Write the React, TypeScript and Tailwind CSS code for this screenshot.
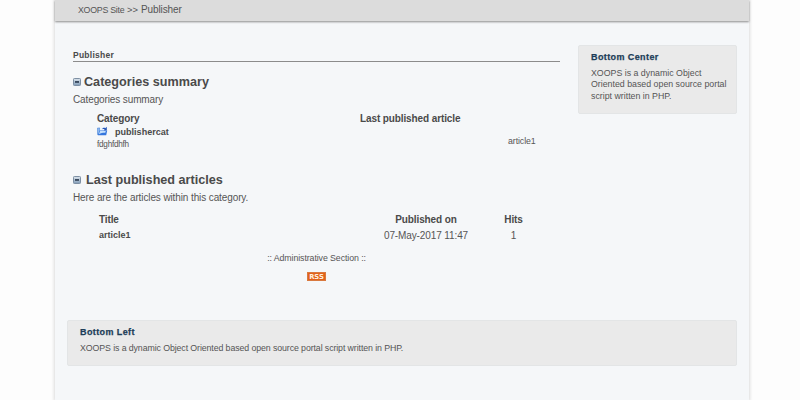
import React from "react";

const sans = "font-['Liberation_Sans',Arial,sans-serif]";

function CollapseIcon() {
  return (
    <svg className="block h-2 w-2 shrink-0" viewBox="0 0 8 8">
      <defs>
        <linearGradient id="collapse" x1="0" y1="0" x2="0" y2="1">
          <stop offset="0" stopColor="#dde6ee" />
          <stop offset="1" stopColor="#7f9ab6" />
        </linearGradient>
      </defs>
      <rect x="0.5" y="0.5" width="7" height="7" rx="0.8" fill="url(#collapse)" stroke="#7d8fa3" />
      <rect x="2" y="3.2" width="4" height="1.5" fill="#1c2c42" />
    </svg>
  );
}

function FolderIcon() {
  return (
    <svg className="-mt-[3px] block h-[10px] w-[11px] shrink-0" viewBox="0 0 11 10">
      <path d="M.5 2h2.500v6.500H.5z" fill="#8db8ee" stroke="#4d87d8" strokeWidth=".6" />
      <path d="M3 2 8.400 .8v5H3z" fill="#e9f3fd" />
      <path d="M5 3.300C6 1.700 7.200 1.500 8.200 2.200L9.800.8v3.700H6.600l1-1.100C6.800 2.900 6 2.900 5 3.300z" fill="#2454b8" />
      <path d="M2.600 4.500h7.600L9.200 9.300H.8z" fill="#3476de" />
      <path d="M3 5h5.800l-.5 1.800C6 6.700 4 7.200 1.900 8.200z" fill="#c4e0fc" />
    </svg>
  );
}

function BlockTitle({ children }: { children: React.ReactNode }) {
  return (
    <h3 className="h-3 whitespace-nowrap text-[9px] leading-[11px] font-bold tracking-[0.4px] text-[#1d3d58] [-webkit-text-stroke:0.25px_#1d3d58]">
      {children}
    </h3>
  );
}

export default function App() {
  return (
    <div className={`h-[400px] w-[800px] overflow-hidden bg-[#fdfdfd] text-[#555555] ${sans}`}>
      <div className="ml-[55px] flex h-[400px] w-[694px] flex-col bg-[#f5f7f9] shadow-[0_0_3px_1px_#dcdcdc]">
        <nav className="flex h-[21px] shrink-0 items-start bg-[#dcdcdc] pl-[23px] whitespace-nowrap leading-5 shadow-[0_1px_2px_#8c8c8c]">
          <span className="w-[49px] text-[8.8px] tracking-[-0.25px]">XOOPS Site</span>
          <span className="w-[14px] text-[9.4px]">&gt;&gt;</span>
          <span className="text-[10px] tracking-[-0.12px]">Publisher</span>
        </nav>

        <div className="flex h-[299px] shrink-0 items-start pt-6 pl-[18px]">
          <main className="w-[487px] shrink-0 whitespace-nowrap">
            <h4 className="h-[17px] border-b border-[#8c8c8c] text-[8.5px] leading-5 font-bold tracking-[0.25px] text-[#4a4a4a]">Publisher</h4>

            <section className="pt-3">
              <h2 className="flex h-4 items-center gap-[3px] text-[12.64px] leading-4 font-bold text-[#4a4a4a]">
                <CollapseIcon />
                Categories summary
              </h2>
              <p className="pt-[3px] text-[10px] leading-[13px] tracking-[-0.12px]">Categories summary</p>
              <div className="mt-[7px] flex h-3 pl-6 text-[10px] leading-3 font-bold tracking-[-0.11px] text-[#4a4a4a]">
                <span className="w-[263px]">Category</span>
                <span>Last published article</span>
              </div>
              <div className="flex pl-6">
                <div className="w-[411px]">
                  <div className="flex h-[14px] items-center gap-[7px] text-[9.05px] leading-[14px] font-bold text-[#4a4a4a]">
                    <FolderIcon />
                    publishercat
                  </div>
                  <p className="h-3 text-[8.2px] leading-3 tracking-[-0.25px]">fdghfdhfh</p>
                </div>
                <span className="pt-[10px] text-[8.800px] leading-3 tracking-[-0.09px]">article1</span>
              </div>
            </section>

            <section className="pt-[21px]">
              <h2 className="flex h-4 items-center gap-[5px] text-[12.64px] leading-4 font-bold text-[#4a4a4a]">
                <CollapseIcon />
                Last published articles
              </h2>
              <p className="pt-[3px] text-[10px] leading-[13px] tracking-[-0.11px]">Here are the articles within this category.</p>
              <div className="mt-[9px] grid h-3 grid-cols-[271px_112px_63px] pl-[26px] text-[10px] leading-[13px] font-bold tracking-[-0.11px] text-[#4a4a4a]">
                <span>Title</span>
                <span className="text-center">Published on</span>
                <span className="text-center">Hits</span>
              </div>
              <div className="mt-1 grid h-3 grid-cols-[271px_112px_63px] pl-[26px] text-[10px] leading-[13px] tracking-[-0.11px]">
                <span className="text-[9px] font-bold tracking-normal text-[#4a4a4a]">article1</span>
                <span className="text-center">07-May-2017 11:47</span>
                <span className="text-center">1</span>
              </div>
            </section>

            <p className="mt-[11px] text-center text-[8.800px] leading-3 tracking-[-0.09px]">:: Administrative Section ::</p>
            <div className="mt-2 ml-[234px] flex h-[9px] w-[19px] items-center justify-center border border-[#d9793f] bg-[#e2621a] pt-px font-['DejaVu_Sans',sans-serif] text-[6.8px] leading-none font-bold text-[#fff0df]">
              RSS
            </div>
          </main>

          <aside className="ml-[18px] h-[69px] w-[159px] rounded-[2px] border border-[#e3e5e6] bg-[#eaeaea] pt-[6px] pl-3">
            <BlockTitle>Bottom Center</BlockTitle>
            <p className="pt-1 text-[8.800px] leading-[11.3px] whitespace-nowrap">
              XOOPS is a dynamic Object
              <br />
              Oriented based open source portal
              <br />
              script written in PHP.
            </p>
          </aside>
        </div>

        <aside className="ml-3 h-[46px] w-[670px] shrink-0 rounded-[2px] border border-[#e3e5e6] bg-[#eaeaea] pt-[6px] pl-3">
          <BlockTitle>Bottom Left</BlockTitle>
          <p className="pt-[3px] text-[8.800px] leading-3 tracking-[-0.1px] whitespace-nowrap">
            XOOPS is a dynamic Object Oriented based open source portal script written in PHP.
          </p>
        </aside>
      </div>
    </div>
  );
}
